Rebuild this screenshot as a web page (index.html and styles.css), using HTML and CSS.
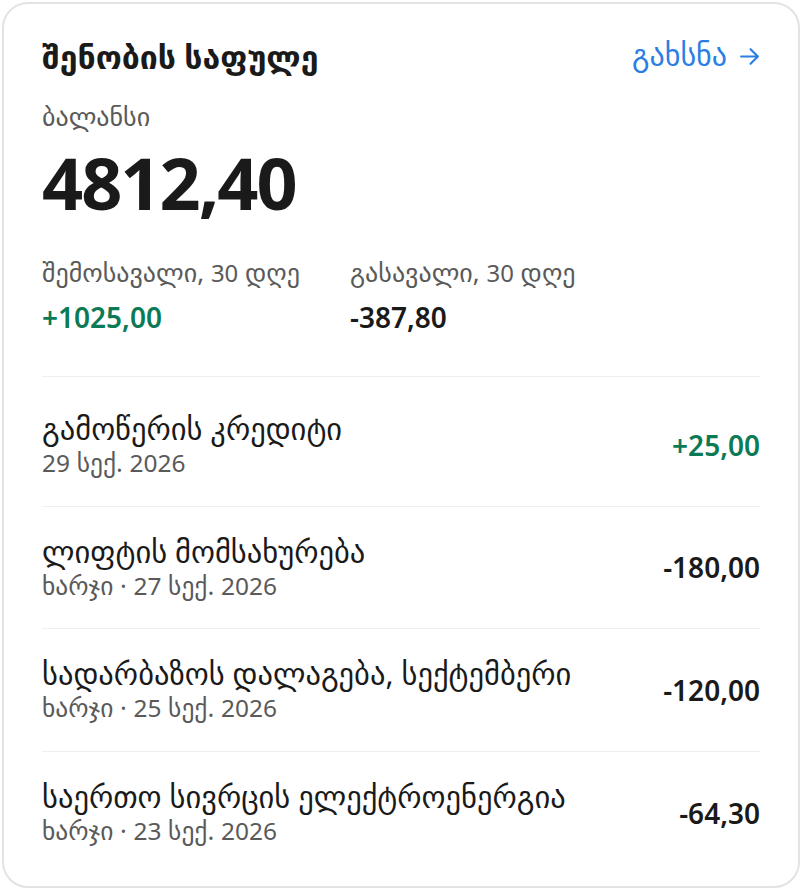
FILE: index.html
```html
<!DOCTYPE html>
<html>
<head>
    <title>შენობის საფულე</title>
    <meta name="viewport" content="width=device-width, initial-scale=1.0">
    <link rel="stylesheet" href="styles.css">
</head>
<body>
    <div class="wallet-card">
        <div class="wallet-head">
            <h2>შენობის საფულე</h2>
            <a class="open-link" href="#">
                გახსნა
                <svg class="arrow" width="21" height="21" viewBox="0 0 20 20" fill="none" stroke="currentColor" stroke-width="2" stroke-linecap="round" stroke-linejoin="round">
                    <path d="M2 10h16M11 3l7 7-7 7"/>
                </svg>
            </a>
        </div>
        <div class="balance-label">ბალანსი</div>
        <div class="balance">4812,40</div>
        <div class="totals">
            <div class="total">
                <div class="total-label">შემოსავალი, <span class="num">30</span> დღე</div>
                <div class="total-value plus">+1025,00</div>
            </div>
            <div class="total">
                <div class="total-label">გასავალი, <span class="num">30</span> დღე</div>
                <div class="total-value">-387,80</div>
            </div>
        </div>
        <ul class="tx-list">
            <li class="tx">
                <div class="tx-info">
                    <div class="tx-title">გამოწერის კრედიტი</div>
                    <div class="tx-meta"><span class="num">29</span> სექ. <span class="num">2026</span></div>
                </div>
                <div class="tx-amount plus">+25,00</div>
            </li>
            <li class="tx">
                <div class="tx-info">
                    <div class="tx-title">ლიფტის მომსახურება</div>
                    <div class="tx-meta">ხარჯი · <span class="num">27</span> სექ. <span class="num">2026</span></div>
                </div>
                <div class="tx-amount">-180,00</div>
            </li>
            <li class="tx">
                <div class="tx-info">
                    <div class="tx-title">სადარბაზოს დალაგება, სექტემბერი</div>
                    <div class="tx-meta">ხარჯი · <span class="num">25</span> სექ. <span class="num">2026</span></div>
                </div>
                <div class="tx-amount">-120,00</div>
            </li>
            <li class="tx">
                <div class="tx-info">
                    <div class="tx-title">საერთო სივრცის ელექტროენერგია</div>
                    <div class="tx-meta">ხარჯი · <span class="num">23</span> სექ. <span class="num">2026</span></div>
                </div>
                <div class="tx-amount">-64,30</div>
            </li>
        </ul>
    </div>
</body>
</html>
```

FILE: styles.css
```css
body {
    font-family: "Noto Sans", "DejaVu Sans", sans-serif;
    margin: 0;
    padding: 2px;
    background: #fff;
    color: #1a1a1a;
}

.wallet-card {
    border: 2px solid #e3e3e3;
    border-radius: 26px;
    padding: 33px 38px 0 38px;
    height: 886px;
    box-sizing: border-box;
}

.wallet-head {
    display: flex;
    justify-content: space-between;
    align-items: center;
    height: 40px;
}

.wallet-head h2 {
    margin: 0;
    font-size: 32px;
    font-weight: 600;
    line-height: 40px;
}

.open-link {
    display: flex;
    align-items: center;
    gap: 12px;
    color: #2b7fe3;
    text-decoration: none;
    font-size: 30px;
    line-height: 40px;
    margin-top: -4px;
}

.arrow {
    margin-top: 2px;
}

.balance-label {
    margin-top: 22px;
    font-size: 26px;
    line-height: 34px;
    color: #5a5a5a;
}

.balance {
    font-size: 72px;
    font-weight: 700;
    line-height: 80px;
    letter-spacing: -2px;
    margin-top: 9px;
}

.totals {
    display: grid;
    grid-template-columns: 308px 1fr;
    margin-top: 34px;
    padding-bottom: 41px;
    border-bottom: 1.5px solid #efefef;
}

.total-label {
    font-size: 26px;
    line-height: 32px;
    color: #5a5a5a;
}

.num {
    font-size: 0.92em;
}

.total-value {
    font-size: 28px;
    font-weight: 600;
    line-height: 36px;
    margin-top: 10px;
}

.plus {
    color: #0b7a55;
}

.tx-list {
    list-style: none;
    margin: 7px 0 0 0;
    padding: 0;
}

.tx {
    display: flex;
    justify-content: space-between;
    align-items: center;
    height: 122.5px;
    box-sizing: border-box;
    border-bottom: 1.5px solid #efefef;
}

.tx:last-child {
    border-bottom: none;
}

.tx-info {
    display: flex;
    flex-direction: column;
    gap: 2px;
}

.tx-title {
    font-size: 30.5px;
    line-height: 34px;
}

.tx-meta {
    font-size: 25.5px;
    line-height: 30px;
    color: #5a5a5a;
}

.tx-meta .num {
    font-size: 0.96em;
}

.tx-amount {
    font-size: 28px;
    font-weight: 600;
}
```
